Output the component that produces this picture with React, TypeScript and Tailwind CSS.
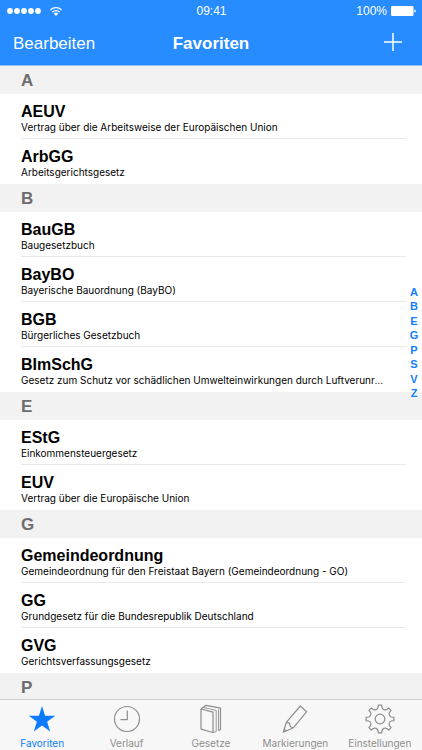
import type { ReactNode } from 'react'

type Law = { short: string; title: string }
type Section = { letter: string; laws: Law[] }

const sections: Section[] = [
  {
    letter: 'A',
    laws: [
      { short: 'AEUV', title: 'Vertrag über die Arbeitsweise der Europäischen Union' },
      { short: 'ArbGG', title: 'Arbeitsgerichtsgesetz' },
    ],
  },
  {
    letter: 'B',
    laws: [
      { short: 'BauGB', title: 'Baugesetzbuch' },
      { short: 'BayBO', title: 'Bayerische Bauordnung (BayBO)' },
      { short: 'BGB', title: 'Bürgerliches Gesetzbuch' },
      {
        short: 'BImSchG',
        title: 'Gesetz zum Schutz vor schädlichen Umwelteinwirkungen durch Luftverunreinigungen',
      },
    ],
  },
  {
    letter: 'E',
    laws: [
      { short: 'EStG', title: 'Einkommensteuergesetz' },
      { short: 'EUV', title: 'Vertrag über die Europäische Union' },
    ],
  },
  {
    letter: 'G',
    laws: [
      { short: 'Gemeindeordnung', title: 'Gemeindeordnung für den Freistaat Bayern (Gemeindeordnung - GO)' },
      { short: 'GG', title: 'Grundgesetz für die Bundesrepublik Deutschland' },
      { short: 'GVG', title: 'Gerichtsverfassungsgesetz' },
    ],
  },
  { letter: 'P', laws: [] },
]

const indexLetters = ['A', 'B', 'E', 'G', 'P', 'S', 'V', 'Z']

function gearPath() {
  const at = (r: number, deg: number) => {
    const a = ((deg - 90) * Math.PI) / 180
    return `${(15 + r * Math.cos(a)).toFixed(2)} ${(15 + r * Math.sin(a)).toFixed(2)}`
  }
  let d = ''
  for (let i = 0; i < 8; i++) {
    const t = i * 45
    d += `${i === 0 ? 'M' : 'L'}${at(14, t - 7)}L${at(14, t + 7)}L${at(11.6, t + 10)}`
    d += `C${at(9.8, t + 15)} ${at(9.8, t + 30)} ${at(11.6, t + 35)}`
  }
  return d + 'Z'
}

function TabIcon({ children }: { children: ReactNode }) {
  return (
    <svg
      aria-hidden="true"
      className="size-[30px]"
      fill="none"
      stroke="currentColor"
      strokeLinejoin="round"
      strokeWidth="1.2"
      viewBox="0 0 30 30"
    >
      {children}
    </svg>
  )
}

const tabs = [
  {
    label: 'Favoriten',
    icon: (
      <path
        d="M15 2l3.1 9.7h10.2l-8.2 6 3.1 9.8L15 21.5l-8.2 6 3.1-9.8-8.2-6h10.2z"
        fill="currentColor"
        stroke="none"
      />
    ),
  },
  {
    label: 'Verlauf',
    icon: (
      <>
        <circle cx="15" cy="15" r="12.5" />
        <path d="M15.3 6.5v9.2H8.5" />
      </>
    ),
  },
  {
    label: 'Gesetze',
    icon: (
      <>
        <path d="M5 5l12 3.2v20.3L5 25.2z" />
        <path d="M5 5l5-3.700 14.500 2.900v21.500l-1.800.6" />
        <path d="M7.200 3.400l13 3v21.200l-3.200.9M22.500 5.400v21.500" strokeWidth="0.9" />
      </>
    ),
  },
  {
    label: 'Markierungen',
    icon: (
      <path d="M20.300 2l6.400 5.700-13.200 16L3.300 28.200l3-9.900zM6.300 18.300l3.200.8.900 3.600 3.100 1M4.300 25.200l2 1.800" />
    ),
  },
  {
    label: 'Einstellungen',
    icon: (
      <>
        <path d={gearPath()} />
        <circle cx="15" cy="15" r="4.8" />
      </>
    ),
  },
]

function StatusBar() {
  return (
    <div className="grid h-[22px] grid-cols-3 items-center pr-1.5 pl-[7px] text-xs">
      <div className="flex items-center gap-2">
        <svg aria-hidden="true" className="h-1.5 w-[35px]" fill="currentColor" viewBox="0 0 35 6">
          {[3, 10, 17, 24, 31].map((cx) => (
            <circle cx={cx} cy="3" key={cx} r="2.9" />
          ))}
        </svg>
        <svg aria-hidden="true" className="h-[9px] w-3" fill="none" stroke="currentColor" viewBox="0 0 12 9">
          <path d="M.4 3a8 8 0 0 1 11.200 0M2.300 5.100a5.200 5.200 0 0 1 7.400 0" strokeWidth="1.3" />
          <path d="M6 9L3.800 6.700a3.100 3.100 0 0 1 4.400 0z" fill="currentColor" stroke="none" />
        </svg>
      </div>
      <span className="text-center font-medium">09:41</span>
      <div className="flex items-center justify-end gap-1">
        <span>100%</span>
        <svg aria-hidden="true" className="h-2.5 w-[25px]" fill="currentColor" viewBox="0 0 25 10">
          <rect height="10" rx="1.2" width="22.5" />
          <path d="M23.300 3.400q1.600.4 1.600 1.600t-1.600 1.600z" />
        </svg>
      </div>
    </div>
  )
}

function NavBar() {
  return (
    <header className="shrink-0 border-b border-[#8cc2ff] bg-[#268cff] text-white">
      <StatusBar />
      <div className="grid h-[43px] grid-cols-[1fr_auto_1fr] items-center px-[13px] text-[17px]">
        <button className="justify-self-start" type="button">
          Bearbeiten
        </button>
        <h1 className="font-bold">Favoriten</h1>
        <button aria-label="Hinzufügen" className="justify-self-end px-[7px] pb-1" type="button">
          <svg className="size-[18px]" stroke="currentColor" strokeWidth="1.5" viewBox="0 0 18 18">
            <path d="M9 0v18M0 9h18" />
          </svg>
        </button>
      </div>
    </header>
  )
}

function LawRow({ law }: { law: Law }) {
  return (
    <li className="group pr-4 pl-[21px]">
      <a
        className="block h-[45px] border-b border-[#e9e9e9] pt-[9px] pr-5 group-last:border-transparent"
        href={`#${law.short}`}
      >
        <span className="block text-base leading-[17px] font-bold">{law.short}</span>
        <span className="block truncate font-[Inter,sans-serif] text-[10px] leading-[14px]">{law.title}</span>
      </a>
    </li>
  )
}

export default function App() {
  return (
    <div className="flex h-screen flex-col bg-white font-['Liberation_Sans',Arial,sans-serif] text-black">
      <NavBar />

      <div className="relative min-h-0 flex-1">
        <main className="h-full overflow-hidden">
          {sections.map((section) => (
            <section id={section.letter} key={section.letter}>
              <h2 className="bg-[#f2f2f2] px-[21px] pt-px text-[17px] leading-[27px] font-bold text-[#6d6d6d]">
                {section.letter}
              </h2>
              <ul>
                {section.laws.map((law) => (
                  <LawRow key={law.short} law={law} />
                ))}
              </ul>
            </section>
          ))}
        </main>

        <nav aria-label="Index" className="absolute inset-y-0 right-0 flex w-4 items-center">
          <div className="mb-20 flex h-[115px] w-full flex-col justify-between text-center text-[11px] leading-[14px] font-bold text-[#157efb]">
            {indexLetters.map((letter) => (
              <a href={`#${letter}`} key={letter}>
                {letter}
              </a>
            ))}
          </div>
        </nav>
      </div>

      <nav className="grid shrink-0 grid-cols-5 border-t border-[#cfd1d1] bg-[#f7f7f7] pt-1 text-[#8e8e8e]">
        {tabs.map((tab, i) => (
          <button
            aria-current={i === 0 ? 'page' : undefined}
            className="flex flex-col items-center gap-0.5 font-[Inter,sans-serif] text-[10px] leading-[14px] aria-[current=page]:text-[#0d7bff]"
            key={tab.label}
            type="button"
          >
            <TabIcon>{tab.icon}</TabIcon>
            {tab.label}
          </button>
        ))}
      </nav>
    </div>
  )
}
